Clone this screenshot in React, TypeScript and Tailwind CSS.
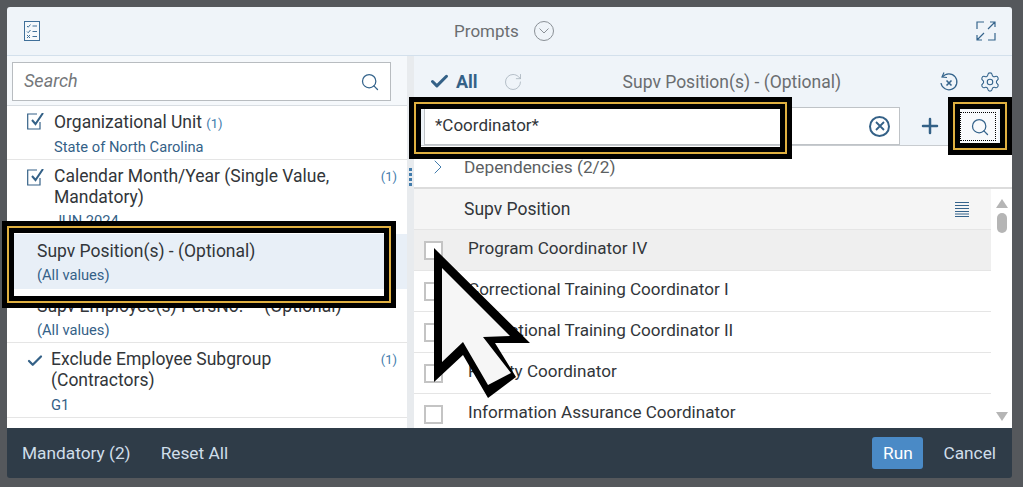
import React from 'react';
import { Check, ChevronRight, Plus, RotateCw, Search, Settings } from 'lucide-react';

const font = { fontFamily: 'Roboto, "Noto Sans", sans-serif' };

// black / gold / black highlight drawn over the screenshot
function Frame({ className }: { className: string }) {
  return (
    <div className={`absolute border-[5px] border-black pointer-events-none ${className}`}>
      <div className="h-full w-full border-2 border-[#e0b040]">
        <div className="h-full w-full border-[5px] border-black" />
      </div>
    </div>
  );
}

function ListIcon() {
  return (
    <svg width="16" height="20" viewBox="0 0 16 20" fill="none" stroke="#3f6f99" strokeWidth="1">
      <rect x="0.5" y="0.5" width="15" height="19" fill="#f4f8fb" />
      <path d="M3 5l1.2 1.2L6.500 3.500M3 10.500l1.200 1.200L6.500 9M3 14l3 3M6 14l-3 3M8.500 5H13M8.500 10.500H13M8.500 15.500H13" />
    </svg>
  );
}

function ExpandIcon() {
  return (
    <svg width="20" height="20" viewBox="0 0 20 20" fill="none" stroke="#35648c" strokeWidth="1.200">
      <path d="M8 1H1v7M12 8l7-7M14 1h5v5M8 12l-7 7M1 14v5h5M12 19h7v-7" />
    </svg>
  );
}

function ResetIcon() {
  return (
    <svg width="20" height="22" viewBox="0 0 20 22" fill="none" stroke="#35648c" strokeWidth="1.200">
      <path d="M5 1.500L3 6l5 .5" />
      <path d="M3.500 6A8 8 0 1 1 2 12" />
      <path d="M7.500 9.500l5 5M12.500 9.500l-5 5" strokeWidth="1.600" />
    </svg>
  );
}

function SortIcon() {
  return (
    <svg width="14" height="15" viewBox="0 0 14 15" fill="none" stroke="#35648c" strokeWidth="1">
      <path d="M0 .5h14M0 3.500h14M0 6.500h14M0 9.500h14M0 12h14M0 14.500h14" />
    </svg>
  );
}

function Cursor() {
  return (
    <svg className="absolute left-[425px] top-[240px] pointer-events-none" width="115" height="165" viewBox="425 240 115 165">
      <polygon points="434,248 530,343 495,343 516,377 488,398 463,355 434,382" fill="#000" />
      <polygon points="442,268 510,336 483,337 511,373 488,385 463,342 442,362" fill="#f6f6f6" />
    </svg>
  );
}

const rows = [
  'Program Coordinator IV',
  'Correctional Training Coordinator I',
  'Correctional Training Coordinator II',
  'Faculty Coordinator',
  'Information Assurance Coordinator',
];

export default function App() {
  return (
    <div className="relative w-[1023px] h-[487px] overflow-hidden bg-[#55585c] pt-[7px] pl-[7px] pr-[11px]" style={font}>
      <div className="flex h-[471px] flex-col overflow-hidden rounded-t-[3px] rounded-b-[3px]">
        {/* header */}
        <div className="flex h-[49px] shrink-0 items-center border-b border-[#d3e0ec] bg-[#eff4f9] pl-[17px] pr-[16px]">
          <ListIcon />
          <div className="flex flex-1 items-center justify-center gap-[15px] pr-[8px]">
            <span className="pt-[2px] text-[17px] text-[#6a6d70]">Prompts</span>
            <span className="flex h-[20px] w-[20px] items-center justify-center rounded-full border border-[#8a9096]">
              <svg width="10" height="6" viewBox="0 0 10 6" fill="none" stroke="#8a9096"><path d="M.5.500L5 5 9.500.500" /></svg>
            </span>
          </div>
          <ExpandIcon />
        </div>

        {/* body */}
        <div className="flex min-h-0 flex-1">
          <div className="flex w-[400px] shrink-0 flex-col bg-white">
            <div className="h-[50px] shrink-0 border-b border-[#d8dde2] bg-[#f5f8fb] pl-[5px] pr-[16px] pt-[6px]">
              <div className="flex h-[39px] items-center justify-between border border-[#b8bcc0] bg-white pl-[11px] pr-[10px]">
                <span className="pb-[2px] text-[18px] italic text-[#74777a]">Search</span>
                <Search size={20} strokeWidth={1.500} color="#35648c" />
              </div>
            </div>
            <div className="flex h-[54px] shrink-0 border-b border-[#e5e5e5] pl-[20px] pt-[4px]">
              <CheckBoxIcon />
              <div className="ml-[10px]">
                <div className="text-[17.500px] leading-[24px] text-[#32363a]">Organizational Unit <span className="text-[13px] text-[#427cac]">(1)</span></div>
                <div className="mt-[1px] text-[14.700px] leading-[20px] text-[#346187]">State of North Carolina</div>
              </div>
            </div>
            <div className="flex h-[74px] shrink-0 pl-[20px] pr-[10px] pt-[6px]">
              <CheckBoxIcon />
              <div className="ml-[10px] flex-1">
                <div className="text-[17.500px] leading-[21px] text-[#32363a]">Calendar Month/Year (Single Value,<br />Mandatory)</div>
                <div className="mt-[3px] text-[14.700px] leading-[20px] text-[#346187]">JUN 2024</div>
              </div>
              <span className="text-[13px] leading-[21px] text-[#427cac]">(1)</span>
            </div>
            <div className="h-[55px] shrink-0 bg-[#e8eff7] pl-[30px] pt-[5px]">
              <div className="text-[17.500px] leading-[24px] text-[#32363a]">Supv Position(s) - (Optional)</div>
              <div className="mt-[2px] text-[14.700px] leading-[20px] text-[#346187]">(All values)</div>
            </div>
            <div className="h-[54px] shrink-0 border-b border-[#e5e5e5] pl-[30px] pt-[5px]">
              <div className="text-[17.500px] leading-[24px] text-[#32363a]">Supv Employee(s) PersNo.* - (Optional)</div>
              <div className="mt-[2px] text-[14.700px] leading-[20px] text-[#346187]">(All values)</div>
            </div>
            <div className="flex h-[75px] shrink-0 border-b border-[#e5e5e5] pl-[19px] pr-[10px] pt-[6px]">
              <Check size={18} strokeWidth={3} color="#346187" className="mt-[3px] shrink-0" />
              <div className="ml-[7px] flex-1">
                <div className="text-[17.500px] leading-[21px] text-[#32363a]">Exclude Employee Subgroup<br />(Contractors)</div>
                <div className="mt-[4px] text-[14.700px] leading-[20px] text-[#346187]">G1</div>
              </div>
              <span className="text-[13px] leading-[21px] text-[#427cac]">(1)</span>
            </div>
          </div>

          {/* splitter */}
          <div className="flex w-[7px] shrink-0 items-center justify-center bg-[#e8ebee] pb-[131px]">
            <div className="flex flex-col gap-[2px]">
              <span className="h-[3px] w-[3px] bg-[#427cac]" />
              <span className="h-[3px] w-[3px] bg-[#427cac]" />
              <span className="h-[3px] w-[3px] bg-[#427cac]" />
              <span className="h-[3px] w-[3px] bg-[#427cac]" />
            </div>
          </div>

          <div className="flex min-w-0 flex-1 flex-col bg-white">
            <div className="flex h-[51px] shrink-0 items-center bg-[#eff4f9] pl-[15px] pr-[11px]">
              <Check size={21} strokeWidth={3.500} color="#346187" />
              <span className="ml-[6px] text-[18px] font-bold text-[#346187]">All</span>
              <RotateCw size={20} strokeWidth={1} color="#a9b4be" className="ml-[25px]" />
              <div className="flex-1 pl-[2px] pt-[2px] text-center text-[17.500px] text-[#6a6d70]">Supv Position(s) - (Optional)</div>
              <ResetIcon />
              <Settings size={22} strokeWidth={1.200} color="#35648c" className="ml-[20px]" />
            </div>
            <div className="flex h-[39px] shrink-0 items-start border-b border-[#c8ccd0] bg-[#eff4f9] pl-[10px]">
              <div className="flex h-[38px] w-[476px] items-center justify-between border border-[#bfc3c7] bg-white pl-[10px] pr-[9px]">
                <span className="pb-[1px] text-[17px] text-[#32363a]">*Coordinator*</span>
                <span className="flex h-[21px] w-[21px] items-center justify-center rounded-full border-2 border-[#346187]">
                  <svg width="10" height="10" viewBox="0 0 10 10" stroke="#346187" strokeWidth="1.800"><path d="M1 1l8 8M9 1l-8 8" /></svg>
                </span>
              </div>
              <Plus size={24} strokeWidth={2.500} color="#346187" className="ml-[18px] mt-[7px]" />
              <div className="ml-[16px] mt-[3px] h-[33px] w-[40px] bg-[#f8fafc] p-[2px]">
                <div className="flex h-[29px] w-[36px] items-center justify-center border border-dotted border-black pl-[3px]">
                  <Search size={20} strokeWidth={1.500} color="#35648c" />
                </div>
              </div>
            </div>
            <div className="flex h-[43px] shrink-0 items-center border-b-2 border-[#dcdcdc] pl-[12px]">
              <ChevronRight size={24} strokeWidth={1} color="#427cac" />
              <span className="ml-[14px] pt-[2px] text-[17.300px] text-[#5c5f62]">Dependencies (2/2)</span>
            </div>
            <div className="flex min-h-0 flex-1">
              <div className="min-w-0 flex-1 overflow-hidden">
                <div className="flex h-[41px] items-center justify-between border-b border-[#e5e5e5] bg-[#f5f5f5] pl-[50px] pr-[22px]">
                  <span className="text-[17.500px] text-[#32363a]">Supv Position</span>
                  <SortIcon />
                </div>
                {rows.map((r, i) => (
                  <div key={r} className={`flex h-[41px] items-center border-b border-[#e5e5e5] pl-[10px] ${i === 0 ? 'bg-[#efefef]' : ''}`}>
                    <span className="h-[19px] w-[19px] shrink-0 border-2 border-[#c4c4c4] bg-white" />
                    <span className="ml-[25px] pb-[2px] text-[17.100px] text-[#32363a]">{r}</span>
                  </div>
                ))}
              </div>
              <div className="flex w-[21px] shrink-0 flex-col items-center pt-[10px] pb-[7px]">
                <span className="h-0 w-0 border-x-[6px] border-b-[9px] border-x-transparent border-b-[#b5b5b5]" />
                <span className="mt-[5px] h-[20px] w-[10px] rounded-full bg-[#b5b5b5]" />
                <span className="mt-auto h-0 w-0 border-x-[6px] border-t-[9px] border-x-transparent border-t-[#b5b5b5]" />
              </div>
            </div>
          </div>
        </div>

        {/* footer */}
        <div className="flex h-[50px] shrink-0 items-center bg-[#2f3c48] pl-[15px] pr-[16px] text-[17.300px] text-[#cfdeea]">
          <span className="pt-[2px]">Mandatory (2)</span>
          <span className="ml-[30px] pt-[2px]">Reset All</span>
          <span className="ml-auto flex h-[32px] w-[51px] items-center justify-center rounded-[3px] bg-[#4a8ac6] pt-[2px] text-white">Run</span>
          <span className="ml-[20px] pt-[2px]">Cancel</span>
        </div>
      </div>

      <Frame className="left-[2px] top-[221px] h-[87px] w-[394px]" />
      <Frame className="left-[409px] top-[97px] h-[62px] w-[383px]" />
      <Frame className="left-[948px] top-[97px] h-[58px] w-[64px]" />
      <Cursor />
    </div>
  );
}

function CheckBoxIcon() {
  return (
    <svg className="mt-[3px] shrink-0" width="17" height="17" viewBox="0 0 17 17" fill="none" stroke="#346187">
      <path d="M13 9v7H.7V1H10" strokeWidth="1.200" />
      <path d="M5 7l3.500 4L16 0" strokeWidth="2" />
    </svg>
  );
}
